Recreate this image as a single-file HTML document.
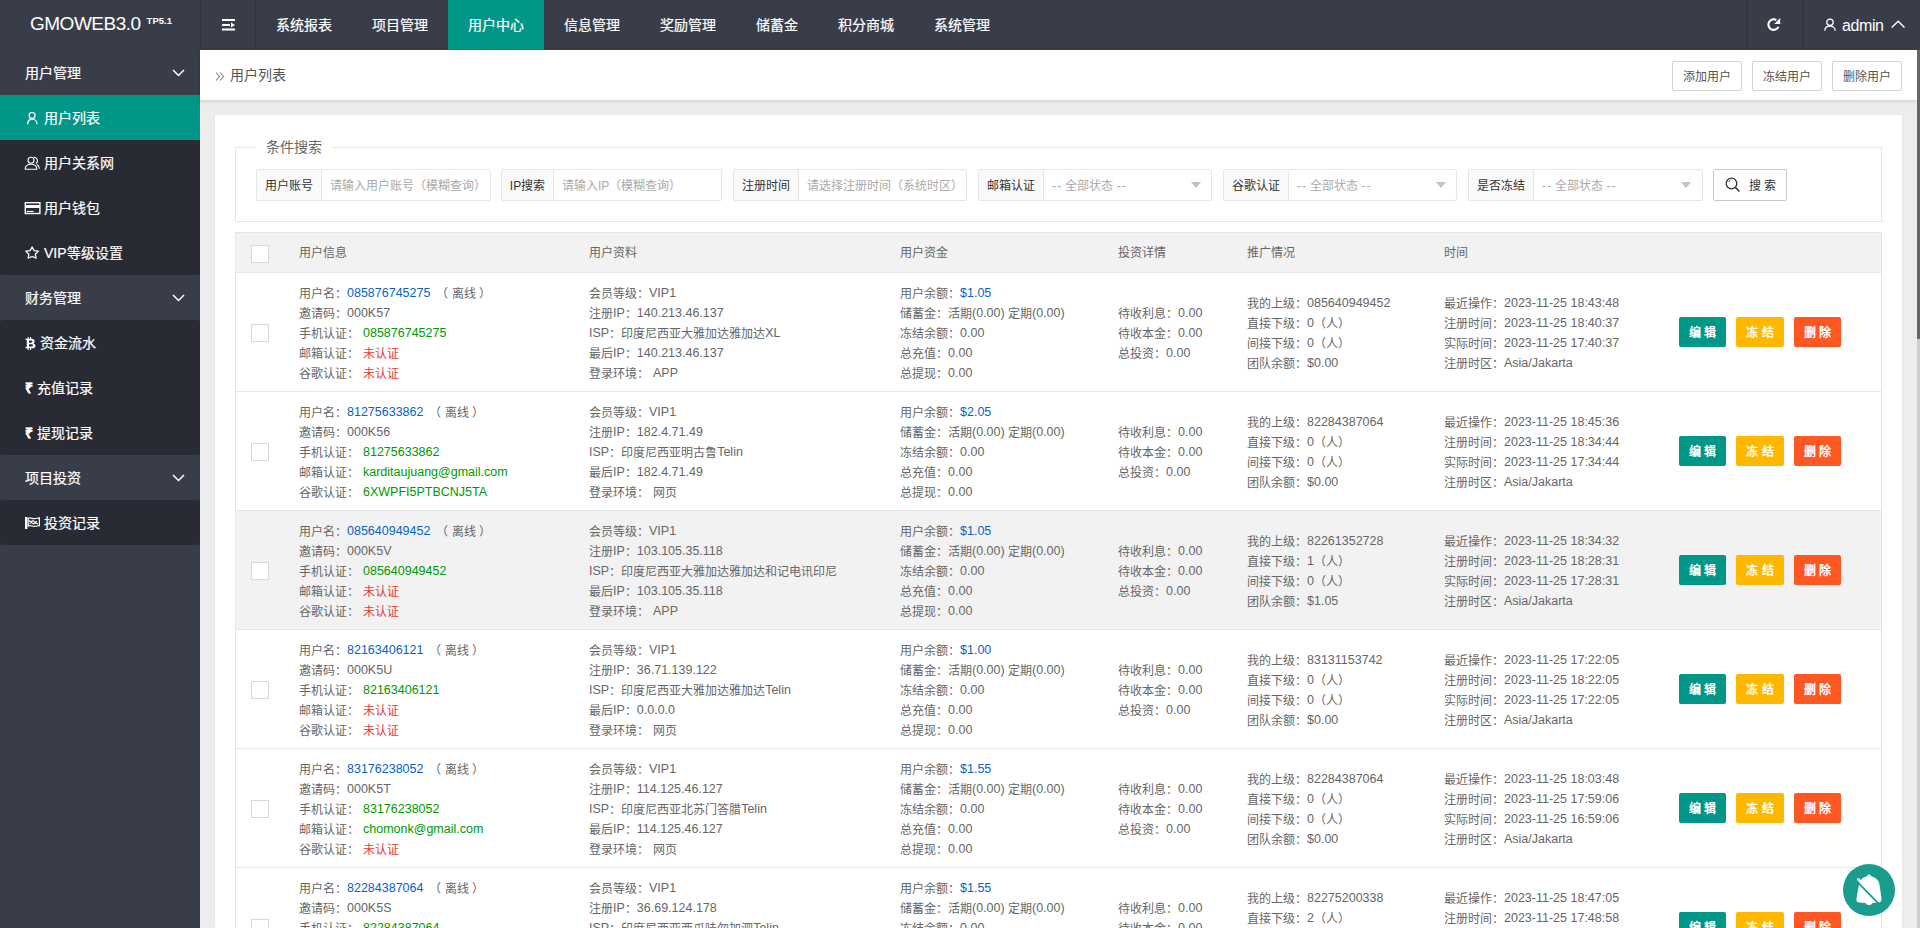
<!DOCTYPE html>
<html lang="zh-CN"><head><meta charset="utf-8">
<style>
*{box-sizing:border-box;margin:0;padding:0}
html,body{width:1920px;height:928px;overflow:hidden;background:#ededed;font-family:"Liberation Sans",sans-serif;color:#666;font-size:12px}
.abs{position:absolute}
#hd{left:0;top:0;width:1920px;height:50px;background:#393D49;color:#fff}
#logo{left:30px;top:12px;font-size:19px;letter-spacing:-0.5px;white-space:nowrap;line-height:24px}
#logo sup{font-size:9.5px;font-weight:bold;position:relative;top:1.5px;margin-left:6px;vertical-align:top;line-height:14px;letter-spacing:0}
.sep{top:0;width:1px;height:50px;background:#30333d}
.nav{top:0;height:50px;line-height:50px;font-size:14px;text-align:center;color:#fff;-webkit-text-stroke:0.2px #fff}
.nav.on{background:#009688}
#side{left:0;top:50px;width:200px;height:878px;background:#393D49}
.sg{position:absolute;left:0;width:200px;height:45px;line-height:47px;color:#fff;font-size:14px;padding-left:25px;-webkit-text-stroke:0.2px #fff}
.sg svg{position:absolute;left:172px;top:19px}
.sc{position:absolute;left:0;width:200px;background:#282B33;border-radius:3px}
.si{position:absolute;left:0;width:200px;height:45px;line-height:47px;color:#fff;font-size:14px;padding-left:44px;-webkit-text-stroke:0.2px #fff}
.si.on{background:#009688}
.si svg{position:absolute;left:25px;top:16px}
#crumb{left:200px;top:50px;width:1717px;height:50px;background:#fff;box-shadow:0 1px 4px rgba(0,0,0,.15)}
#crumb .t{position:absolute;left:30px;top:0;line-height:50px;font-size:14px;color:#555}
#crumb .ar{position:absolute;left:14px;top:0;line-height:48px;font-size:14px;color:#999}
.btnp{position:absolute;top:11px;height:30px;line-height:30px;border:1px solid #d2d2d2;border-radius:2px;background:#fff;color:#555;font-size:12px;text-align:center;width:70px}
#sb{left:1917px;top:50px;width:3px;height:878px;background:#cdcdcd}
#sbt{left:1917px;top:50px;width:3px;height:289px;background:#666}
#card{left:215px;top:115px;width:1687px;height:813px;background:#fff;box-shadow:0 0 2px rgba(0,0,0,.06)}
#fs{left:235px;top:147px;width:1647px;height:75px;border:1px solid #e6e6e6}
#legend{left:256px;top:138px;padding:0 10px;background:#fff;font-size:14px;line-height:18px;color:#666}
.ig{position:absolute;top:169px;height:32px;border:1px solid #e6e6e6;border-radius:2px;background:#fff}
.ig .lb{position:absolute;left:0;top:0;height:30px;line-height:33px;background:#fafafa;border-right:1px solid #e6e6e6;color:#333;text-align:center}
.ig .ph{position:absolute;top:0;line-height:33px;color:#aaa;white-space:nowrap}
.ig .tri{position:absolute;top:12px;width:0;height:0;border-left:6px solid transparent;border-right:6px solid transparent;border-top:6px solid #c2c2c2;border-left-width:5.5px;border-right-width:5.5px}
#sbtn{left:1713px;top:169px;width:74px;height:32px;border:1px solid #c9c9c9;border-radius:2px;background:#fff;color:#333;font-size:12px;line-height:30px}
#tbl{left:235px;top:232px;width:1647px;height:696px;border-left:1px solid #e6e6e6;border-right:1px solid #e6e6e6}
#th{position:absolute;left:0;top:0;width:100%;height:40px;background:#f2f2f2;border-top:1px solid #e6e6e6}
.hc{position:absolute;top:0;line-height:40px;color:#666;white-space:nowrap}
.cb{position:absolute;left:15px;width:18px;height:18px;border:1px solid #d8d8d8;background:#fff}
#th .cb{top:11px}
.row{position:absolute;left:0;width:100%;height:119px;border-top:1px solid #e6e6e6;background:#fff}
.row.hov{background:#f2f2f2}
.c{position:absolute;white-space:nowrap}
.ln{height:20px;line-height:20px}
.blu{color:#0862c9}
.grn{color:#090}
.red{color:#e4393c}
.off{margin-left:6px}
.sp{display:inline-block;width:4px}
.sp2{display:inline-block;width:4px}
.btn{position:absolute;width:47px;height:30px;line-height:33px;color:#fff;text-align:center;border-radius:2px;font-size:12px;font-weight:bold}
#fab{left:1843px;top:864px;width:52px;height:52px;border-radius:50%;background:#1a9c8e}
.n{font-size:12.5px;position:relative;top:-1px}
.dd{font-size:12.5px;letter-spacing:0.9px}
.sp45{display:inline-block;width:3.2px}

</style></head><body>
<div id="hd" class="abs">
  <div id="logo" class="abs">GMOWEB3.0<sup>TP5.1</sup></div>
  <div class="sep abs" style="left:200px"></div>
  <div class="sep abs" style="left:255px"></div>
  <svg class="abs" style="left:222px;top:19px" width="14" height="12" viewBox="0 0 14 12"><rect x="0" y="0" width="13" height="2" fill="#fff"/><rect x="0" y="5" width="8" height="2" fill="#fff"/><path d="M9 3.5 L13 6 L9 8.5Z" fill="#fff"/><rect x="0" y="9.5" width="13" height="2" fill="#fff"/></svg>
  <div class="nav abs" style="left:256px;width:96px">系统报表</div>
  <div class="nav abs" style="left:352px;width:96px">项目管理</div>
  <div class="nav abs on" style="left:448px;width:96px">用户中心</div>
  <div class="nav abs" style="left:544px;width:96px">信息管理</div>
  <div class="nav abs" style="left:640px;width:96px">奖励管理</div>
  <div class="nav abs" style="left:736px;width:82px">储蓄金</div>
  <div class="nav abs" style="left:818px;width:96px">积分商城</div>
  <div class="nav abs" style="left:914px;width:96px">系统管理</div>
  <div class="sep abs" style="left:1746px"></div>
  <div class="sep abs" style="left:1802px"></div>
  <svg class="abs" style="left:1766px;top:17px" width="16" height="16" viewBox="0 0 16 16"><path d="M12.5 9.84A5.3 5.3 0 1 1 10.35 3.0" fill="none" stroke="#fff" stroke-width="2.1"/><path d="M14.2 0.9L14.2 7L8.3 7Z" fill="#fff"/></svg>
  <svg class="abs" style="left:1823px;top:17px" width="14" height="15" viewBox="0 0 14 15"><circle cx="7" cy="5.3" r="3.2" fill="none" stroke="#fff" stroke-width="1.3"/><path d="M1.8 13.8C1.8 11 3.8 9.2 7 9.2C10.2 9.2 12.2 11 12.2 13.8" fill="none" stroke="#fff" stroke-width="1.3"/></svg>
  <div class="abs" style="left:1842px;top:0;line-height:50px;font-size:16px;letter-spacing:-0.4px;color:#fff;padding-top:1px">admin</div>
  <svg class="abs" style="left:1891px;top:20px" width="14" height="9" viewBox="0 0 14 9"><path d="M0.7 7.6L7.2 1.3L13.5 7.6" fill="none" stroke="#fff" stroke-width="1.4"/></svg>
</div>
<div id="side" class="abs">
  <div class="sg" style="top:0">用户管理<svg width="13" height="8" viewBox="0 0 13 8"><path d="M1 1 L6.5 6.5 L12 1" fill="none" stroke="#fff" stroke-width="1.5"/></svg></div>
  <div class="sc" style="top:45px;height:180px"></div>
  <div class="si on" style="top:45px"><svg style="left:26px;top:17px" width="13" height="13" viewBox="0 0 13 13"><circle cx="6.1" cy="3.4" r="3" fill="none" stroke="#fff" stroke-width="1.2"/><path d="M1.6 12.3C1.6 9.3 3.5 7.2 6.2 7.2C9 7.2 11 9.3 11 12.3" fill="none" stroke="#fff" stroke-width="1.3"/></svg>用户列表</div>
  <div class="si" style="top:90px"><svg style="left:24px;top:15px" width="17" height="16" viewBox="0 0 17 16"><circle cx="7" cy="5.2" r="3" fill="none" stroke="#fff" stroke-width="1.1"/><path d="M1.2 14.2C1.2 11 3.5 9.2 7 9.2C10.5 9.2 12.8 11 12.8 14.2Z" fill="none" stroke="#fff" stroke-width="1.1"/><path d="M9.5 2.3C11.5 2 13.5 3.6 13.5 5.5C13.5 7 12.7 8 11.8 8.6M12.8 9.6C14.2 10.3 15.2 11.6 15.4 13.8" fill="none" stroke="#fff" stroke-width="1.1"/></svg>用户关系网</div>
  <div class="si" style="top:135px"><svg style="left:24px;top:16px" width="17" height="14" viewBox="0 0 17 14"><rect x="1.3" y="1.7" width="14.6" height="10.8" fill="none" stroke="#fff" stroke-width="1.4"/><rect x="1" y="4" width="15" height="3" fill="#fff"/><rect x="2.6" y="9.9" width="7" height="1.1" fill="#fff"/></svg>用户钱包</div>
  <div class="si" style="top:180px"><svg width="15" height="15" viewBox="0 0 15 15"><path d="M7.1 1L9.1 4.6L13.4 5.1L10.3 8.2L11.1 12.1L7.1 10.5L3.1 12.1L3.9 8.2L0.8 5.1L5.1 4.6Z" fill="none" stroke="#fff" stroke-width="1.3" stroke-linejoin="round"/></svg>VIP等级设置</div>
  <div class="sg" style="top:225px">财务管理<svg width="13" height="8" viewBox="0 0 13 8"><path d="M1 1 L6.5 6.5 L12 1" fill="none" stroke="#fff" stroke-width="1.5"/></svg></div>
  <div class="sc" style="top:270px;height:135px"></div>
  <div class="si" style="top:270px;padding-left:40px"><svg style="left:25px;top:17px" width="11" height="13" viewBox="0 0 11 13"><path fill-rule="evenodd" d="M0.5 1.8H6.3C8.7 1.8 9.6 3 9.6 4.3C9.6 5.3 9.1 6 8.3 6.3C9.6 6.7 10.4 7.6 10.4 8.9C10.4 10.4 9.3 11.2 7 11.2H0.5V10H1.8V3H0.5ZM4 3.5V5.8H6C6.9 5.8 7.4 5.3 7.4 4.6C7.4 3.9 6.9 3.5 6 3.5ZM4 7.3V9.5H6.4C7.4 9.5 8 9.1 8 8.4C8 7.7 7.4 7.3 6.4 7.3Z" fill="#fff"/><rect x="2.6" y="0" width="1.1" height="2" fill="#fff"/><rect x="5" y="0" width="1.1" height="2" fill="#fff"/><rect x="2.6" y="11" width="1.1" height="2" fill="#fff"/><rect x="5" y="11" width="1.1" height="2" fill="#fff"/></svg>资金流水</div>
  <div class="si" style="top:315px;padding-left:37px"><span class="abs" style="left:25px;top:0;font-weight:bold;font-size:14px">&#8377;</span>充值记录</div>
  <div class="si" style="top:360px;padding-left:37px"><span class="abs" style="left:25px;top:0;font-weight:bold;font-size:14px">&#8377;</span>提现记录</div>
  <div class="sg" style="top:405px">项目投资<svg width="13" height="8" viewBox="0 0 13 8"><path d="M1 1 L6.5 6.5 L12 1" fill="none" stroke="#fff" stroke-width="1.5"/></svg></div>
  <div class="sc" style="top:450px;height:45px"></div>
  <div class="si" style="top:450px"><svg style="left:25px;top:17px" width="15" height="12" viewBox="0 0 15 12"><rect x="0" y="0" width="2.4" height="12" fill="#fff"/><path d="M3.2 1.2C5.2 0.3 7.2 1.7 9.2 1.7C11.2 1.7 12.8 0.9 14.4 0.9V8.6C12.8 8.6 11.2 9.4 9.2 9.4C7.2 9.4 5.2 8.1 3.2 8.9Z" fill="none" stroke="#fff" stroke-width="1.2"/><path d="M4 3.5L6 4.8L8 3.7L10 5.2L12 4.2M4.5 6.6L6.5 5.6L8.5 6.8L10.5 5.9L13 7" fill="none" stroke="#fff" stroke-width="1.1"/></svg>投资记录</div>
</div>
<div id="crumb" class="abs"><svg class="abs" style="left:15px;top:22px" width="10" height="9" viewBox="0 0 10 9"><path d="M1 .5 L4.5 4.5 L1 8.5 M5 .5 L8.5 4.5 L5 8.5" fill="none" stroke="#888" stroke-width="1.1"/></svg><span class="t">用户列表</span>
  <div class="btnp" style="left:1472px">添加用户</div>
  <div class="btnp" style="left:1552px">冻结用户</div>
  <div class="btnp" style="left:1632px">删除用户</div>
</div>
<div id="sb" class="abs"></div><div id="sbt" class="abs"></div>
<div id="card" class="abs"></div>
<div id="fs" class="abs"></div>
<div id="legend" class="abs">条件搜索</div>
<div class="ig" style="left:256px;width:235px"><div class="lb" style="width:65px">用户账号</div><div class="ph" style="left:73px">请输入用户账号（模糊查询）</div></div>
<div class="ig" style="left:501px;width:221px"><div class="lb" style="width:52px">IP搜索</div><div class="ph" style="left:60px">请输入IP（模糊查询）</div></div>
<div class="ig" style="left:733px;width:234px"><div class="lb" style="width:65px">注册时间</div><div class="ph" style="left:73px">请选择注册时间（系统时区）</div></div>
<div class="ig" style="left:978px;width:234px"><div class="lb" style="width:65px">邮箱认证</div><div class="ph" style="left:73px"><span class="dd">--</span><span class="sp45"></span>全部状态<span class="sp45"></span><span class="dd">--</span></div><div class="tri" style="left:212px"></div></div>
<div class="ig" style="left:1223px;width:234px"><div class="lb" style="width:65px">谷歌认证</div><div class="ph" style="left:73px"><span class="dd">--</span><span class="sp45"></span>全部状态<span class="sp45"></span><span class="dd">--</span></div><div class="tri" style="left:212px"></div></div>
<div class="ig" style="left:1468px;width:235px"><div class="lb" style="width:65px">是否冻结</div><div class="ph" style="left:73px"><span class="dd">--</span><span class="sp45"></span>全部状态<span class="sp45"></span><span class="dd">--</span></div><div class="tri" style="left:212px"></div></div>
<div id="sbtn" class="abs"><svg class="abs" style="left:11px;top:7px" width="16" height="16" viewBox="0 0 16 16"><circle cx="6.5" cy="6.5" r="5.3" fill="none" stroke="#333" stroke-width="1.3"/><path d="M10.5 10.5 L14.5 14.5" stroke="#333" stroke-width="1.6"/><path d="M3.8 5 A3 3 0 0 1 5.5 3.2" fill="none" stroke="#333" stroke-width="1"/></svg><span class="abs" style="left:35px;top:1px">搜 索</span></div>

<div id="tbl" class="abs">
<div id="th">
<div class="cb" style="top:12px"></div>
<div class="hc" style="left:63px">用户信息</div>
<div class="hc" style="left:353px">用户资料</div>
<div class="hc" style="left:664px">用户资金</div>
<div class="hc" style="left:882px">投资详情</div>
<div class="hc" style="left:1011px">推广情况</div>
<div class="hc" style="left:1208px">时间</div>
</div>
<div class="row" style="top:40px">
<div class="cb" style="top:51px"></div>
<div class="c" style="left:63px;top:11px"><div class="ln">用户名：<span class="blu n">085876745275</span><span class="off">（ 离线 ）</span></div><div class="ln">邀请码：<span class="n">000K57</span></div><div class="ln">手机认证：<span class="sp"></span><span class="grn n">085876745275</span></div><div class="ln">邮箱认证：<span class="sp"></span><span class="red">未认证</span></div><div class="ln">谷歌认证：<span class="sp"></span><span class="red">未认证</span></div></div>
<div class="c" style="left:353px;top:11px"><div class="ln">会员等级：<span class="n">VIP1</span></div><div class="ln">注册<span class="n">IP</span>：<span class="n">140.213.46.137</span></div><div class="ln"><span class="n">ISP</span>：印度尼西亚大雅加达雅加达<span class="n">XL</span></div><div class="ln">最后<span class="n">IP</span>：<span class="n">140.213.46.137</span></div><div class="ln">登录环境：<span class="sp2"></span><span class="n">APP</span></div></div>
<div class="c" style="left:664px;top:11px"><div class="ln">用户余额：<span class="blu n">$1.05</span></div><div class="ln">储蓄金：活期<span class="n">(0.00)</span> 定期<span class="n">(0.00)</span></div><div class="ln">冻结余额：<span class="n">0.00</span></div><div class="ln">总充值：<span class="n">0.00</span></div><div class="ln">总提现：<span class="n">0.00</span></div></div>
<div class="c" style="left:882px;top:31px"><div class="ln">待收利息：<span class="n">0.00</span></div><div class="ln">待收本金：<span class="n">0.00</span></div><div class="ln">总投资：<span class="n">0.00</span></div></div>
<div class="c" style="left:1011px;top:21px"><div class="ln">我的上级：<span class="n">085640949452</span></div><div class="ln">直接下级：<span class="n">0</span>（人）</div><div class="ln">间接下级：<span class="n">0</span>（人）</div><div class="ln">团队余额：<span class="n">$0.00</span></div></div>
<div class="c" style="left:1208px;top:21px"><div class="ln">最近操作：<span class="n">2023-11-25 18:43:48</span></div><div class="ln">注册时间：<span class="n">2023-11-25 18:40:37</span></div><div class="ln">实际时间：<span class="n">2023-11-25 17:40:37</span></div><div class="ln">注册时区：<span class="n">Asia/Jakarta</span></div></div>
<div class="btn" style="left:1443px;top:44px;background:#009688">编 辑</div>
<div class="btn" style="left:1500px;top:44px;width:48px;background:#FFB800">冻 结</div>
<div class="btn" style="left:1558px;top:44px;background:#FF5722">删 除</div>
</div><div class="row" style="top:159px">
<div class="cb" style="top:51px"></div>
<div class="c" style="left:63px;top:11px"><div class="ln">用户名：<span class="blu n">81275633862</span><span class="off">（ 离线 ）</span></div><div class="ln">邀请码：<span class="n">000K56</span></div><div class="ln">手机认证：<span class="sp"></span><span class="grn n">81275633862</span></div><div class="ln">邮箱认证：<span class="sp"></span><span class="grn n">karditaujuang@gmail.com</span></div><div class="ln">谷歌认证：<span class="sp"></span><span class="grn n">6XWPFI5PTBCNJ5TA</span></div></div>
<div class="c" style="left:353px;top:11px"><div class="ln">会员等级：<span class="n">VIP1</span></div><div class="ln">注册<span class="n">IP</span>：<span class="n">182.4.71.49</span></div><div class="ln"><span class="n">ISP</span>：印度尼西亚明古鲁<span class="n">Telin</span></div><div class="ln">最后<span class="n">IP</span>：<span class="n">182.4.71.49</span></div><div class="ln">登录环境：<span class="sp2"></span>网页</div></div>
<div class="c" style="left:664px;top:11px"><div class="ln">用户余额：<span class="blu n">$2.05</span></div><div class="ln">储蓄金：活期<span class="n">(0.00)</span> 定期<span class="n">(0.00)</span></div><div class="ln">冻结余额：<span class="n">0.00</span></div><div class="ln">总充值：<span class="n">0.00</span></div><div class="ln">总提现：<span class="n">0.00</span></div></div>
<div class="c" style="left:882px;top:31px"><div class="ln">待收利息：<span class="n">0.00</span></div><div class="ln">待收本金：<span class="n">0.00</span></div><div class="ln">总投资：<span class="n">0.00</span></div></div>
<div class="c" style="left:1011px;top:21px"><div class="ln">我的上级：<span class="n">82284387064</span></div><div class="ln">直接下级：<span class="n">0</span>（人）</div><div class="ln">间接下级：<span class="n">0</span>（人）</div><div class="ln">团队余额：<span class="n">$0.00</span></div></div>
<div class="c" style="left:1208px;top:21px"><div class="ln">最近操作：<span class="n">2023-11-25 18:45:36</span></div><div class="ln">注册时间：<span class="n">2023-11-25 18:34:44</span></div><div class="ln">实际时间：<span class="n">2023-11-25 17:34:44</span></div><div class="ln">注册时区：<span class="n">Asia/Jakarta</span></div></div>
<div class="btn" style="left:1443px;top:44px;background:#009688">编 辑</div>
<div class="btn" style="left:1500px;top:44px;width:48px;background:#FFB800">冻 结</div>
<div class="btn" style="left:1558px;top:44px;background:#FF5722">删 除</div>
</div><div class="row hov" style="top:278px">
<div class="cb" style="top:51px"></div>
<div class="c" style="left:63px;top:11px"><div class="ln">用户名：<span class="blu n">085640949452</span><span class="off">（ 离线 ）</span></div><div class="ln">邀请码：<span class="n">000K5V</span></div><div class="ln">手机认证：<span class="sp"></span><span class="grn n">085640949452</span></div><div class="ln">邮箱认证：<span class="sp"></span><span class="red">未认证</span></div><div class="ln">谷歌认证：<span class="sp"></span><span class="red">未认证</span></div></div>
<div class="c" style="left:353px;top:11px"><div class="ln">会员等级：<span class="n">VIP1</span></div><div class="ln">注册<span class="n">IP</span>：<span class="n">103.105.35.118</span></div><div class="ln"><span class="n">ISP</span>：印度尼西亚大雅加达雅加达和记电讯印尼</div><div class="ln">最后<span class="n">IP</span>：<span class="n">103.105.35.118</span></div><div class="ln">登录环境：<span class="sp2"></span><span class="n">APP</span></div></div>
<div class="c" style="left:664px;top:11px"><div class="ln">用户余额：<span class="blu n">$1.05</span></div><div class="ln">储蓄金：活期<span class="n">(0.00)</span> 定期<span class="n">(0.00)</span></div><div class="ln">冻结余额：<span class="n">0.00</span></div><div class="ln">总充值：<span class="n">0.00</span></div><div class="ln">总提现：<span class="n">0.00</span></div></div>
<div class="c" style="left:882px;top:31px"><div class="ln">待收利息：<span class="n">0.00</span></div><div class="ln">待收本金：<span class="n">0.00</span></div><div class="ln">总投资：<span class="n">0.00</span></div></div>
<div class="c" style="left:1011px;top:21px"><div class="ln">我的上级：<span class="n">82261352728</span></div><div class="ln">直接下级：<span class="n">1</span>（人）</div><div class="ln">间接下级：<span class="n">0</span>（人）</div><div class="ln">团队余额：<span class="n">$1.05</span></div></div>
<div class="c" style="left:1208px;top:21px"><div class="ln">最近操作：<span class="n">2023-11-25 18:34:32</span></div><div class="ln">注册时间：<span class="n">2023-11-25 18:28:31</span></div><div class="ln">实际时间：<span class="n">2023-11-25 17:28:31</span></div><div class="ln">注册时区：<span class="n">Asia/Jakarta</span></div></div>
<div class="btn" style="left:1443px;top:44px;background:#009688">编 辑</div>
<div class="btn" style="left:1500px;top:44px;width:48px;background:#FFB800">冻 结</div>
<div class="btn" style="left:1558px;top:44px;background:#FF5722">删 除</div>
</div><div class="row" style="top:397px">
<div class="cb" style="top:51px"></div>
<div class="c" style="left:63px;top:11px"><div class="ln">用户名：<span class="blu n">82163406121</span><span class="off">（ 离线 ）</span></div><div class="ln">邀请码：<span class="n">000K5U</span></div><div class="ln">手机认证：<span class="sp"></span><span class="grn n">82163406121</span></div><div class="ln">邮箱认证：<span class="sp"></span><span class="red">未认证</span></div><div class="ln">谷歌认证：<span class="sp"></span><span class="red">未认证</span></div></div>
<div class="c" style="left:353px;top:11px"><div class="ln">会员等级：<span class="n">VIP1</span></div><div class="ln">注册<span class="n">IP</span>：<span class="n">36.71.139.122</span></div><div class="ln"><span class="n">ISP</span>：印度尼西亚大雅加达雅加达<span class="n">Telin</span></div><div class="ln">最后<span class="n">IP</span>：<span class="n">0.0.0.0</span></div><div class="ln">登录环境：<span class="sp2"></span>网页</div></div>
<div class="c" style="left:664px;top:11px"><div class="ln">用户余额：<span class="blu n">$1.00</span></div><div class="ln">储蓄金：活期<span class="n">(0.00)</span> 定期<span class="n">(0.00)</span></div><div class="ln">冻结余额：<span class="n">0.00</span></div><div class="ln">总充值：<span class="n">0.00</span></div><div class="ln">总提现：<span class="n">0.00</span></div></div>
<div class="c" style="left:882px;top:31px"><div class="ln">待收利息：<span class="n">0.00</span></div><div class="ln">待收本金：<span class="n">0.00</span></div><div class="ln">总投资：<span class="n">0.00</span></div></div>
<div class="c" style="left:1011px;top:21px"><div class="ln">我的上级：<span class="n">83131153742</span></div><div class="ln">直接下级：<span class="n">0</span>（人）</div><div class="ln">间接下级：<span class="n">0</span>（人）</div><div class="ln">团队余额：<span class="n">$0.00</span></div></div>
<div class="c" style="left:1208px;top:21px"><div class="ln">最近操作：<span class="n">2023-11-25 17:22:05</span></div><div class="ln">注册时间：<span class="n">2023-11-25 18:22:05</span></div><div class="ln">实际时间：<span class="n">2023-11-25 17:22:05</span></div><div class="ln">注册时区：<span class="n">Asia/Jakarta</span></div></div>
<div class="btn" style="left:1443px;top:44px;background:#009688">编 辑</div>
<div class="btn" style="left:1500px;top:44px;width:48px;background:#FFB800">冻 结</div>
<div class="btn" style="left:1558px;top:44px;background:#FF5722">删 除</div>
</div><div class="row" style="top:516px">
<div class="cb" style="top:51px"></div>
<div class="c" style="left:63px;top:11px"><div class="ln">用户名：<span class="blu n">83176238052</span><span class="off">（ 离线 ）</span></div><div class="ln">邀请码：<span class="n">000K5T</span></div><div class="ln">手机认证：<span class="sp"></span><span class="grn n">83176238052</span></div><div class="ln">邮箱认证：<span class="sp"></span><span class="grn n">chomonk@gmail.com</span></div><div class="ln">谷歌认证：<span class="sp"></span><span class="red">未认证</span></div></div>
<div class="c" style="left:353px;top:11px"><div class="ln">会员等级：<span class="n">VIP1</span></div><div class="ln">注册<span class="n">IP</span>：<span class="n">114.125.46.127</span></div><div class="ln"><span class="n">ISP</span>：印度尼西亚北苏门答腊<span class="n">Telin</span></div><div class="ln">最后<span class="n">IP</span>：<span class="n">114.125.46.127</span></div><div class="ln">登录环境：<span class="sp2"></span>网页</div></div>
<div class="c" style="left:664px;top:11px"><div class="ln">用户余额：<span class="blu n">$1.55</span></div><div class="ln">储蓄金：活期<span class="n">(0.00)</span> 定期<span class="n">(0.00)</span></div><div class="ln">冻结余额：<span class="n">0.00</span></div><div class="ln">总充值：<span class="n">0.00</span></div><div class="ln">总提现：<span class="n">0.00</span></div></div>
<div class="c" style="left:882px;top:31px"><div class="ln">待收利息：<span class="n">0.00</span></div><div class="ln">待收本金：<span class="n">0.00</span></div><div class="ln">总投资：<span class="n">0.00</span></div></div>
<div class="c" style="left:1011px;top:21px"><div class="ln">我的上级：<span class="n">82284387064</span></div><div class="ln">直接下级：<span class="n">0</span>（人）</div><div class="ln">间接下级：<span class="n">0</span>（人）</div><div class="ln">团队余额：<span class="n">$0.00</span></div></div>
<div class="c" style="left:1208px;top:21px"><div class="ln">最近操作：<span class="n">2023-11-25 18:03:48</span></div><div class="ln">注册时间：<span class="n">2023-11-25 17:59:06</span></div><div class="ln">实际时间：<span class="n">2023-11-25 16:59:06</span></div><div class="ln">注册时区：<span class="n">Asia/Jakarta</span></div></div>
<div class="btn" style="left:1443px;top:44px;background:#009688">编 辑</div>
<div class="btn" style="left:1500px;top:44px;width:48px;background:#FFB800">冻 结</div>
<div class="btn" style="left:1558px;top:44px;background:#FF5722">删 除</div>
</div><div class="row" style="top:635px">
<div class="cb" style="top:51px"></div>
<div class="c" style="left:63px;top:11px"><div class="ln">用户名：<span class="blu n">82284387064</span><span class="off">（ 离线 ）</span></div><div class="ln">邀请码：<span class="n">000K5S</span></div><div class="ln">手机认证：<span class="sp"></span><span class="grn n">82284387064</span></div><div class="ln">邮箱认证：<span class="sp"></span><span class="red">未认证</span></div><div class="ln">谷歌认证：<span class="sp"></span><span class="red">未认证</span></div></div>
<div class="c" style="left:353px;top:11px"><div class="ln">会员等级：<span class="n">VIP1</span></div><div class="ln">注册<span class="n">IP</span>：<span class="n">36.69.124.178</span></div><div class="ln"><span class="n">ISP</span>：印度尼西亚西爪哇勿加泗<span class="n">Telin</span></div><div class="ln">最后<span class="n">IP</span>：<span class="n">36.69.124.178</span></div><div class="ln">登录环境：<span class="sp2"></span>网页</div></div>
<div class="c" style="left:664px;top:11px"><div class="ln">用户余额：<span class="blu n">$1.55</span></div><div class="ln">储蓄金：活期<span class="n">(0.00)</span> 定期<span class="n">(0.00)</span></div><div class="ln">冻结余额：<span class="n">0.00</span></div><div class="ln">总充值：<span class="n">0.00</span></div><div class="ln">总提现：<span class="n">0.00</span></div></div>
<div class="c" style="left:882px;top:31px"><div class="ln">待收利息：<span class="n">0.00</span></div><div class="ln">待收本金：<span class="n">0.00</span></div><div class="ln">总投资：<span class="n">0.00</span></div></div>
<div class="c" style="left:1011px;top:21px"><div class="ln">我的上级：<span class="n">82275200338</span></div><div class="ln">直接下级：<span class="n">2</span>（人）</div><div class="ln">间接下级：<span class="n">0</span>（人）</div><div class="ln">团队余额：<span class="n">$0.00</span></div></div>
<div class="c" style="left:1208px;top:21px"><div class="ln">最近操作：<span class="n">2023-11-25 18:47:05</span></div><div class="ln">注册时间：<span class="n">2023-11-25 17:48:58</span></div><div class="ln">实际时间：<span class="n">2023-11-25 17:48:58</span></div><div class="ln">注册时区：<span class="n">Asia/Jakarta</span></div></div>
<div class="btn" style="left:1443px;top:44px;background:#009688">编 辑</div>
<div class="btn" style="left:1500px;top:44px;width:48px;background:#FFB800">冻 结</div>
<div class="btn" style="left:1558px;top:44px;background:#FF5722">删 除</div>
</div>
</div>
<div id="fab" class="abs"><svg width="52" height="52" viewBox="0 0 52 52"><path d="M26 10.5C24.5 10.5 23.8 11.5 23.6 12.5C19 13.5 16.5 16.5 16 20.5L13.5 34.5C13 36.5 14 38.3 16 38.5L22.5 39C23.5 40.5 24.8 41.2 26 41.2C27.2 41.2 28.5 40.5 29.5 39L35.5 38.5C37.5 38.3 38.8 36.5 38.5 34.5L36.5 20.5C36 16.5 33 13.5 28.4 12.5C28.2 11.5 27.5 10.5 26 10.5Z" fill="#fff"/><path d="M12.9 16.3L35.3 39.4" stroke="#1a9c8e" stroke-width="1.8"/><path d="M14.5 14.6L37 37.8" stroke="#fff" stroke-width="2.3"/></svg></div>
</body></html>
